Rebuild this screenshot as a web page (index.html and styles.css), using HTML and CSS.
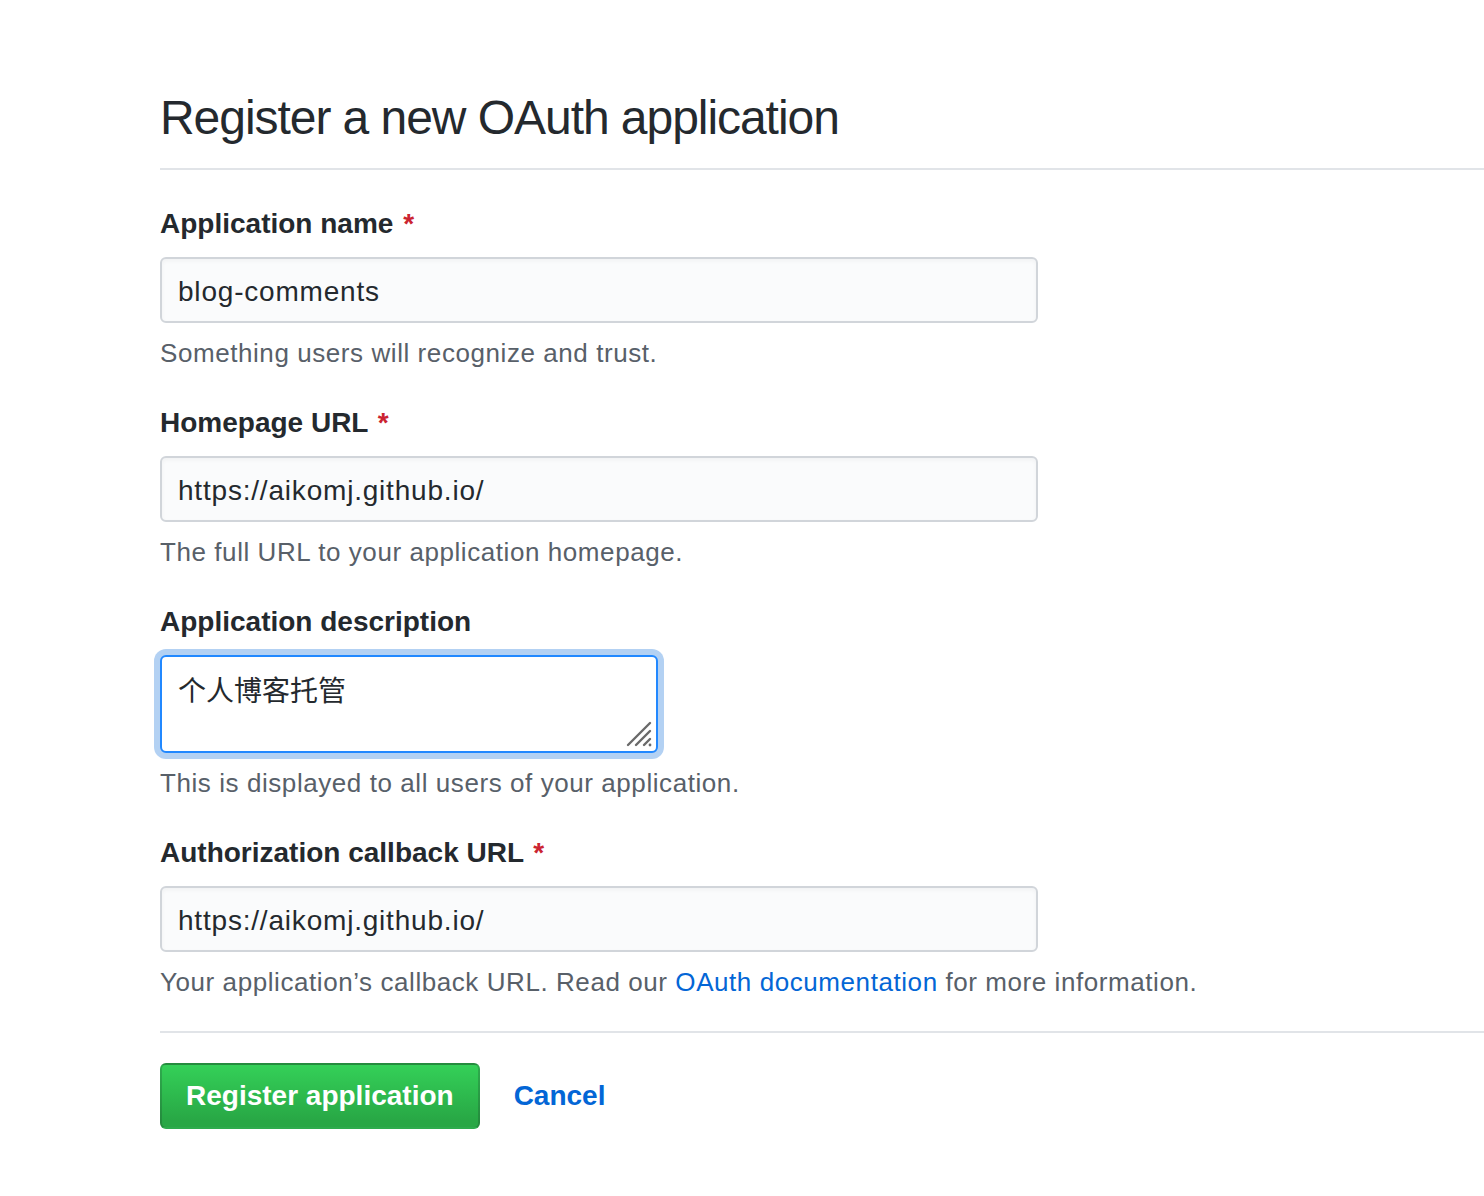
FILE: index.html
```html
<!DOCTYPE html>
<html>
<head>
<meta charset="utf-8">
<link rel="stylesheet" href="styles.css">
</head>
<body>
<div class="page">
  <div class="subhead">
    <h2 class="subhead-heading">Register a new OAuth application</h2>
  </div>
  <form class="form">
    <div class="form-group">
      <label class="label">Application name <span class="req">*</span></label>
      <div class="input wide">blog-comments</div>
      <p class="note">Something users will recognize and trust.</p>
    </div>
    <div class="form-group">
      <label class="label">Homepage URL <span class="req">*</span></label>
      <div class="input wide">https://aikomj.github.io/</div>
      <p class="note">The full URL to your application homepage.</p>
    </div>
    <div class="form-group">
      <label class="label">Application description</label>
      <div class="textarea">
        <span class="cjk">个人博客托管</span>
        <svg class="grip" width="30" height="30" viewBox="0 0 30 30">
          <line x1="4" y1="26" x2="26" y2="4" stroke="#6a6a6a" stroke-width="2.4" stroke-linecap="round"/>
          <line x1="12" y1="26" x2="26" y2="12" stroke="#6a6a6a" stroke-width="2.4" stroke-linecap="round"/>
          <line x1="20" y1="26" x2="26" y2="20" stroke="#6a6a6a" stroke-width="2.4" stroke-linecap="round"/>
          <circle cx="26" cy="26" r="1.4" fill="#6a6a6a"/>
        </svg>
      </div>
      <p class="note">This is displayed to all users of your application.</p>
    </div>
    <div class="form-group">
      <label class="label">Authorization callback URL <span class="req">*</span></label>
      <div class="input wide">https://aikomj.github.io/</div>
      <p class="note">Your application’s callback URL. Read our <a class="link" href="#">OAuth documentation</a> for more information.</p>
    </div>
    <div class="actions">
      <button type="button" class="btn-primary">Register application</button>
      <a class="cancel" href="#">Cancel</a>
    </div>
  </form>
</div>
</body>
</html>
```

FILE: styles.css
```css
html, body {
  margin: 0;
  padding: 0;
  background: #ffffff;
}
body {
  font-family: "Liberation Sans", Arial, "Noto Sans CJK SC", sans-serif;
  color: #24292e;
  overflow: hidden;
}
.page {
  margin-left: 160px;
  padding-top: 88px;
}
.subhead {
  border-bottom: 2px solid #e1e4e8;
  padding-bottom: 20px;
}
.subhead-heading {
  margin: 0;
  font-size: 48px;
  line-height: 60px;
  font-weight: 400;
  letter-spacing: -1.05px;
  color: #24292e;
}
.form {
  padding-top: 33px;
}
.form-group {
  margin-bottom: 31px;
}
.label {
  display: block;
  font-size: 28px;
  line-height: 42px;
  font-weight: 700;
  margin-bottom: 12px;
}
.req {
  color: #cb2431;
  margin-left: 2px;
}
.input {
  box-sizing: border-box;
  height: 66px;
  width: 878px;
  border: 2px solid #d1d5da;
  border-radius: 6px;
  background: #fafbfc;
  box-shadow: inset 0 2px 4px rgba(27,31,35,0.04);
  font-size: 28px;
  line-height: 62px;
  padding: 2px 16px 0;
  letter-spacing: 0.8px;
  color: #24292e;
}
.textarea {
  position: relative;
  box-sizing: border-box;
  width: 498px;
  height: 98px;
  border: 2px solid #2188ff;
  border-radius: 6px;
  background: #ffffff;
  box-shadow: 0 0 0 6px rgba(3,102,214,0.3);
  padding: 14px 16px;
  font-size: 28px;
  line-height: 36px;
}
.cjk {
  font-family: "Noto Sans CJK SC", sans-serif;
  color: #24292e;
}
.grip {
  position: absolute;
  right: 2px;
  bottom: 2px;
}
.note {
  margin: 12px 0 0 0;
  font-size: 26px;
  line-height: 36px;
  letter-spacing: 0.57px;
  color: #586069;
}
.link {
  color: #0366d6;
  text-decoration: none;
}
.actions {
  border-top: 2px solid #e1e4e8;
  padding-top: 30px;
  display: flex;
  align-items: center;
}
.btn-primary {
  box-sizing: border-box;
  height: 66px;
  padding: 0 24px;
  border: 2px solid rgba(27,31,35,0.2);
  border-radius: 6px;
  background: linear-gradient(#34d058, #28a745 90%);
  color: #ffffff;
  font-family: "Liberation Sans", Arial, sans-serif;
  font-size: 28px;
  font-weight: 700;
  cursor: pointer;
}
.cancel {
  margin-left: 34px;
  color: #0366d6;
  font-size: 28px;
  font-weight: 700;
  text-decoration: none;
}
```
